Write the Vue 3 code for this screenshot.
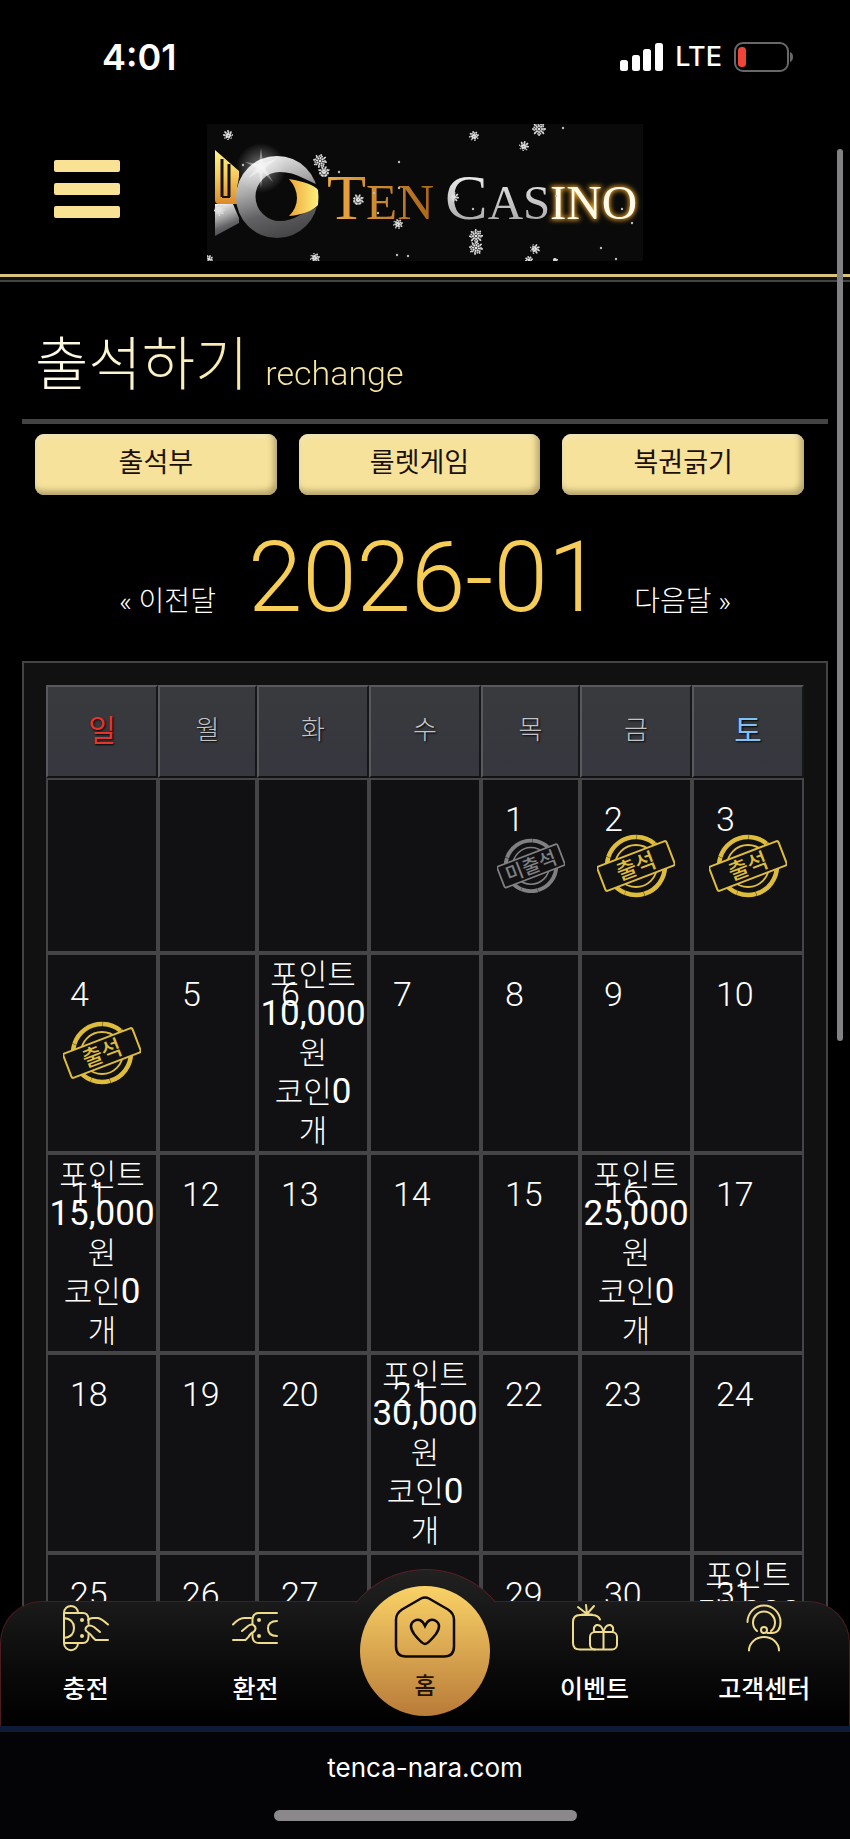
<script setup>
const tabs = ['출석부', '룰렛게임', '복권긁기']
const weekdays = ['일', '월', '화', '수', '목', '금', '토']

const marks = { 1: 'absent', 2: 'present', 3: 'present', 4: 'present' }
const rewards = { 6: '10,000', 11: '15,000', 16: '25,000', 21: '30,000', 31: '50,000' }

const firstWeekday = 4
const weeks = Array.from({ length: 5 }, (_, w) =>
  Array.from({ length: 7 }, (_, d) => {
    const day = w * 7 + d - firstWeekday + 1
    return day > 0 ? { day, mark: marks[day], reward: rewards[day] } : { day: null }
  })
)

const flakes = [
  [21, 11, 5], [113, 37, 7], [117, 48, 6], [267, 12, 5], [332, 5, 7], [317, 22, 5],
  [151, 76, 6], [191, 100, 5], [269, 112, 7], [269, 124, 7], [328, 125, 5], [108, 134, 5],
  [12, 86, 6], [247, 73, 5], [2, 135, 4], [322, 136, 4], [348, 136, 3]
]
const sparks = [
  [36, 41], [192, 38], [192, 64], [167, 69], [266, 85], [190, 131], [201, 132],
  [356, 4], [394, 124], [409, 135], [425, 99], [415, 85], [132, 48], [171, 89], [349, 72]
]
const rays = [0, 45, 90, 135]
</script>

<template>
  <div class="screen">
    <div class="status">
      <span class="clock">4:01</span>
      <div class="status-right">
        <svg width="43" height="28" viewBox="0 0 43 28" fill="#fff" aria-hidden="true">
          <rect x="0" y="17" width="8" height="11" rx="2.5" />
          <rect x="12" y="12" width="8" height="16" rx="2.5" />
          <rect x="23" y="6" width="8" height="22" rx="2.5" />
          <rect x="35" y="0" width="8" height="28" rx="2.5" />
        </svg>
        <span class="net">LTE</span>
        <svg width="60" height="30" viewBox="0 0 60 30" fill="none" aria-hidden="true">
          <rect x="1" y="1" width="53" height="28" rx="8" stroke="#68686b" stroke-width="2" />
          <rect x="4" y="5" width="8" height="20" rx="3.5" fill="#f04438" />
          <path d="M56 10c4 1 4 9 0 10z" fill="#68686b" />
        </svg>
      </div>
    </div>

    <header class="top">
      <button class="menu" type="button" aria-label="메뉴"><i></i><i></i><i></i></button>
      <a class="logo" href="#" aria-label="Ten Casino">
        <svg width="436" height="137" viewBox="0 0 436 137">
          <defs>
            <linearGradient id="gold" x1="0" y1="0" x2="0" y2="1">
              <stop offset="0" stop-color="#fff48a" /><stop offset=".45" stop-color="#f7ce5b" />
              <stop offset="1" stop-color="#dc8a2c" />
            </linearGradient>
            <linearGradient id="eye" x1="0" y1="0" x2="1" y2="0">
              <stop offset="0" stop-color="#eda73a" /><stop offset="1" stop-color="#fff07c" />
            </linearGradient>
            <linearGradient id="ten" x1="0" y1="0" x2="1" y2="0">
              <stop offset="0" stop-color="#f0ac42" /><stop offset="1" stop-color="#a86518" />
            </linearGradient>
            <linearGradient id="ring" x1=".2" y1="0" x2=".5" y2="1">
              <stop offset="0" stop-color="#f4f4f4" /><stop offset=".4" stop-color="#a9a9aa" />
              <stop offset=".7" stop-color="#626265" /><stop offset="1" stop-color="#47474a" />
            </linearGradient>
            <linearGradient id="silver" x1="0" y1="0" x2="0" y2="1">
              <stop offset="0" stop-color="#fff" /><stop offset="1" stop-color="#9a9a9c" />
            </linearGradient>
            <radialGradient id="flare">
              <stop offset="0" stop-color="#fff" /><stop offset=".3" stop-color="#fff" stop-opacity=".5" />
              <stop offset="1" stop-color="#fff" stop-opacity="0" />
            </radialGradient>
            <filter id="glow" x="-30%" y="-30%" width="160%" height="160%">
              <feGaussianBlur stdDeviation="2.500" />
            </filter>
          </defs>
          <rect width="436" height="137" fill="#0a0a0a" />
          <path d="M8 26v50q0 4 4 4h20l-2-16 2-11V47z" fill="url(#gold)" />
          <path d="M15 35v38M22 40v33" stroke="#15110a" stroke-width="3" />
          <path d="M15 73h8" stroke="#15110a" stroke-width="2" />
          <path d="M8 112V80h18l6 14v5z" fill="url(#ring)" />
          <circle cx="70" cy="73" r="41" fill="url(#ring)" />
          <path d="M73 48a24.500 24.500 0 1 0 0 49q10 0 20-6l20-9V62l-17-8q-11-6-23-6z" fill="#0a0a0a" />
          <path d="M82 55q24 4 29 11 1 7 0 15-8 9-29 11 8-8 8-18t-8-19z" fill="url(#eye)" />
          <circle cx="54" cy="44" r="25" fill="url(#flare)" opacity=".65" />
          <path d="M54 24l2 15 14-4-12 9 8 14-10-10-2 16-2-16-11 6 9-10-12-6 14 2z" fill="#fff" opacity=".4" />
          <g font-family="Liberation Serif, serif">
            <text x="120" y="95" font-size="64" fill="url(#ten)">T<tspan font-size="51">EN</tspan></text>
            <text x="238" y="95" font-size="64" fill="url(#silver)">C<tspan font-size="49">AS</tspan></text>
            <text x="343" y="95" font-size="49" fill="#f0a52c" stroke="#f0a52c" stroke-width="2" filter="url(#glow)" aria-hidden="true">INO</text>
            <text x="343" y="95" font-size="49" fill="#fffbe8">INO</text>
          </g>
          <g stroke="#d8d8d8" stroke-width="1.500" fill="none">
            <g v-for="(f, i) in flakes" :key="i">
              <line v-for="r in rays" :key="r" :x1="f[0] - f[2]" :x2="f[0] + f[2]" :y1="f[1]" :y2="f[1]"
                stroke-dasharray="2 1" :transform="`rotate(${r + i * 11} ${f[0]} ${f[1]})`" />
              <circle :cx="f[0]" :cy="f[1]" :r="f[2] - 2" stroke-dasharray="1.500 1.200" fill="#fff" fill-opacity=".25" />
            </g>
          </g>
          <circle v-for="(s, i) in sparks" :key="i" :cx="s[0]" :cy="s[1]" r="1.200" fill="#bbb" />
        </svg>
      </a>
    </header>

    <main class="page">
      <h1 class="title">출석하기 <small>rechange</small></h1>

      <div class="tabs">
        <button v-for="t in tabs" :key="t" type="button">{{ t }}</button>
      </div>

      <div class="month">
        <a href="#">« 이전달</a>
        <strong>2026-01</strong>
        <a href="#">다음달 »</a>
      </div>

      <section class="calendar">
        <table>
          <colgroup>
            <col class="wide"><col class="slim"><col class="wide"><col class="wide">
            <col class="slim"><col class="wide"><col class="wide">
          </colgroup>
          <thead>
            <tr>
              <th v-for="(w, i) in weekdays" :key="w" scope="col" :class="{ sun: i === 0, sat: i === 6 }">{{ w }}</th>
            </tr>
          </thead>
          <tbody>
            <tr v-for="(week, wi) in weeks" :key="wi">
              <td v-for="(c, ci) in week" :key="ci">
                <span v-if="c.day" class="day">{{ c.day }}</span>
                <svg v-if="c.mark" class="stamp" :class="c.mark" viewBox="0 0 78 64">
                  <circle cx="39" cy="32" r="29" stroke-width="4.500" stroke-dasharray="37 .4 19 .3 43 .4" />
                  <circle cx="39" cy="32" r="21" stroke-width="1.800" />
                  <g transform="rotate(-21 39 32)">
                    <rect x="2" y="19" width="74" height="26" rx="2" stroke-width="2" />
                    <text x="39" y="40" text-anchor="middle">{{ c.mark === 'present' ? '출석' : '미출석' }}</text>
                  </g>
                </svg>
                <p v-if="c.reward" class="reward">
                  포인트<br><b>{{ c.reward }}</b><br>원<br>코인<b>0</b><br>개
                </p>
              </td>
            </tr>
          </tbody>
        </table>
      </section>
    </main>

    <div class="scroll-thumb"></div>

    <footer class="bottom">
      <nav class="dock">
        <div class="hump"></div>
        <a href="#">
          <svg class="icon" viewBox="0 0 46 46">
            <path d="M1 8v30M1 8C1-1.500 15-1.500 15 8M1 38c0 9.500 14 9.500 14 0M1 8h19q5 0 5.500 6v5M1 38h19q5 0 5.500-6v-3M1 13q10 1 10 10T1 33" />
            <path d="M25 15q2-2 5-2h5q4 1 10 6.500M37 27l-6-5q-5-3-7.500 0t1 5q3 2 5 5l3 3h12.500" />
            <circle class="dot" cx="19" cy="15" r="2" /><circle class="dot" cx="19" cy="31" r="2" />
          </svg>
          <span>충전</span>
        </a>
        <a href="#">
          <svg class="icon" viewBox="0 0 46 46">
            <path d="M45 8H27q-6 0-6.500 6v5M45 38H27q-6 0-6.500-6v-3M45 16q-9 0-9 7.500t9 7.500" />
            <path d="M1 19.500Q7 13 12 13h7M10 26l6-5q4-3 6.500 0t-1 6q-3 1-5 5l-3 3H1" />
            <circle class="dot" cx="27" cy="15" r="2" /><circle class="dot" cx="27" cy="31" r="2" />
          </svg>
          <span>환전</span>
        </a>
        <a class="home" href="#">
          <svg viewBox="0 0 62 62">
            <path d="M27 2.500q4-2 8 0l19 11q6 4 6 10v27q0 10-10 10H12Q2 60.500 2 50.500v-27q0-6 6-10z" />
            <path d="M31 48q-3 0-11-10-6-9 0-13 7-4 11 5 4-9 11-5 6 4 0 13-8 10-11 10z" />
          </svg>
          <span>홈</span>
        </a>
        <a href="#">
          <svg class="icon" viewBox="0 0 46 46">
            <path d="M28 14.500Q26 10 20 10H8q-7 0-7 7v21q0 6.500 7 6.500h15M10 9.500h10M15 9L6 2M15 9L14 0M15 9l7-8" />
            <rect x="18" y="27" width="27" height="17.500" rx="5" />
            <path d="M31.500 27v17M31.500 27q-2-8-7-7-4 2-2 7M31.500 27q2-8 7-7 4 2 2 7" />
          </svg>
          <span>이벤트</span>
        </a>
        <a href="#">
          <svg class="icon" viewBox="0 0 46 46">
            <path d="M6.500 17a16.500 16.500 0 1 1 33 0q0 11-9 11h-4M16 26a11 11 0 1 1 14 0M8 45.500a15 13.500 0 0 1 30 0" />
            <circle cx="23" cy="25" r="3" />
          </svg>
          <span>고객센터</span>
        </a>
      </nav>
      <div class="browser">
        <span>tenca-nara.com</span>
        <div class="indicator"></div>
      </div>
    </footer>
  </div>
</template>

<style>
body {
  background: #000;
}
</style>

<style scoped>
* {
  box-sizing: border-box;
}

.screen {
  position: relative;
  display: flex;
  flex-direction: column;
  height: 100vh;
  overflow: hidden;
  background: #000;
  color: #fff;
  font-family: "Noto Sans CJK KR", sans-serif;
  font-weight: 300;
}

a {
  color: inherit;
  text-decoration: none;
}

button {
  font: inherit;
  border: 0;
  padding: 0;
}

.status {
  flex: none;
  display: flex;
  justify-content: space-between;
  align-items: center;
  height: 96px;
  padding: 18px 56px 0 102px;
  font-family: Inter, sans-serif;
}

.clock {
  font-size: 36px;
  font-weight: 600;
}

.status-right {
  display: flex;
  align-items: center;
  gap: 12px;
}

.net {
  font-size: 27px;
  font-weight: 500;
  line-height: 32px;
}

/* header */
.top {
  flex: none;
  display: grid;
  grid-template-columns: 1fr auto 1fr;
  align-items: center;
  padding: 28px 0 13px;
  border-bottom: 3px solid #d9c47c;
  box-shadow: 0 3px 0 #111, 0 5px 0 #444;
}

.menu {
  display: flex;
  flex-direction: column;
  justify-content: space-between;
  width: 66px;
  height: 58px;
  margin-left: 54px;
  margin-bottom: 8px;
  background: none;
}

.menu i {
  height: 12px;
  border-radius: 2px;
  background: #f9e294;
}

.logo svg {
  display: block;
}

/* page */
.page {
  flex: 1;
  min-height: 0;
  padding: 42px 22px 0;
  overflow: hidden;
}

.title {
  margin: 0;
  padding: 0 13px 4px;
  border-bottom: 5px solid #444446;
  font-size: 58px;
  font-weight: 300;
  line-height: 83px;
  color: transparent;
  background: linear-gradient(90deg, #fffdf0, #f7e7a3 240px, #f7e7a3) padding-box text;
}

.title small {
  margin-left: 4px;
  font-family: Roboto, sans-serif;
  font-size: 34px;
}

.tabs {
  display: grid;
  grid-template-columns: repeat(3, 1fr);
  gap: 22px;
  padding: 10px 24px 0 13px;
}

.tabs button {
  height: 61px;
  padding-bottom: 8px;
  border-radius: 9px;
  background: #f6e29a;
  box-shadow: inset -3px -4px 6px #b19f68, inset 1px 3px 5px #f4e7bd;
  color: #1a1008;
  font-size: 27px;
  font-weight: 400;
}

.month {
  display: flex;
  justify-content: center;
  align-items: baseline;
  gap: 32px;
  height: 166px;
  line-height: 166px;
  font-family: Roboto, "Noto Sans CJK KR", sans-serif;
  font-size: 28px;
}

.month strong {
  color: #f6cd56;
  font-size: 98px;
  font-weight: 300;
}

.calendar {
  padding: 22px;
  border: 2px solid #444;
  background: #121112;
}

table {
  width: 100%;
  table-layout: fixed;
  border-spacing: 0;
}

.wide {
  width: 112px;
}

.slim {
  width: 99px;
}

th {
  height: 93px;
  padding: 0 0 8px;
  border: 2px solid;
  border-color: #58595c #15171b #111216 #58595c;
  background: linear-gradient(#383a3d, #36373f);
  color: #c4c5c8;
  font-size: 26px;
  font-weight: 300;
  text-shadow: 1px 1px 2px #000;
}

.sun {
  color: #e5352b;
  font-size: 30px;
  font-weight: 400;
}

.sat {
  color: #7cc4f5;
  font-size: 30px;
  font-weight: 400;
}

td {
  position: relative;
  height: 200px;
  padding: 0;
  border: 2px solid #454447;
  background: #111113;
  text-align: center;
  vertical-align: middle;
}

tbody tr:first-child td {
  height: 175px;
}

.day {
  position: absolute;
  top: 19px;
  left: 22px;
  font-family: Roboto, sans-serif;
  font-size: 34px;
  line-height: 40px;
}

.reward {
  margin: 0;
  font-family: Roboto, "Noto Sans CJK KR", sans-serif;
  font-size: 31px;
  line-height: 39px;
}

.reward b {
  font-size: 35px;
  line-height: 1;
  font-weight: 400;
}

.stamp {
  display: block;
  width: 78px;
  margin: 0 auto;
  fill: none;
  stroke: #dfbd3c;
}

.stamp rect {
  fill: #111113;
}

.stamp text {
  fill: #dfbd3c;
  stroke: none;
  font-size: 22px;
  font-weight: 500;
}

.stamp.absent {
  width: 68px;
  stroke: #808083;
}

.stamp.absent text {
  fill: #808083;
}

.scroll-thumb {
  position: absolute;
  top: 149px;
  right: 7px;
  width: 6px;
  height: 892px;
  border-radius: 3px;
  background: #828184;
}

/* bottom bars lie over the calendar */
.bottom {
  position: absolute;
  right: 0;
  bottom: 0;
  left: 0;
}

.bottom::before {
  content: "";
  position: absolute;
  right: 0;
  bottom: 0;
  left: 0;
  height: 190px;
  background: #000;
}

.dock {
  position: relative;
  display: grid;
  grid-template-columns: repeat(5, 1fr);
  height: 125px;
  border: 1px solid #4d1c20;
  border-bottom: 0;
  border-radius: 42px 42px 0 0;
  background: linear-gradient(#1b1a1b, #0c0b0c 50%, #010001);
}

.hump {
  position: absolute;
  top: -33px;
  left: 50%;
  width: 140px;
  height: 34px;
  margin-left: -70px;
  overflow: hidden;
}

.hump::before {
  content: "";
  position: absolute;
  top: 0;
  left: -20px;
  width: 180px;
  height: 180px;
  border: 1px solid #5a1f24;
  border-radius: 50%;
  background: linear-gradient(#222122, #1b1a1b 34px);
}

.dock a {
  position: relative;
  display: flex;
  flex-direction: column;
  align-items: center;
  padding-top: 3px;
  font-size: 25px;
  font-weight: 500;
  line-height: 36px;
}

.icon {
  width: 46px;
  height: 46px;
  margin-bottom: 18px;
  overflow: visible;
  fill: none;
  stroke: #eedb8b;
  stroke-width: 2;
  stroke-linecap: round;
}

.icon .dot {
  fill: #eedb8b;
  stroke: none;
}

.dock .home {
  justify-self: center;
  width: 130px;
  height: 130px;
  margin-top: -16px;
  padding-top: 10px;
  border-radius: 50%;
  background: linear-gradient(#fad267, #b97b39);
  color: #241403;
  font-size: 23px;
}

.home svg {
  width: 62px;
  height: 62px;
  margin-bottom: 8px;
  fill: none;
  stroke: #0e0903;
  stroke-width: 2.500;
}

.browser {
  position: relative;
  display: flex;
  flex-direction: column;
  align-items: center;
  justify-content: space-between;
  height: 113px;
  padding: 20px 0 18px;
  border-top: 6px solid #0d1b38;
  background: #040305;
  font-family: Inter, sans-serif;
  font-size: 26px;
  font-weight: 400;
  line-height: 32px;
}

.indicator {
  width: 303px;
  height: 11px;
  border-radius: 6px;
  background: #8a888b;
}
</style>
